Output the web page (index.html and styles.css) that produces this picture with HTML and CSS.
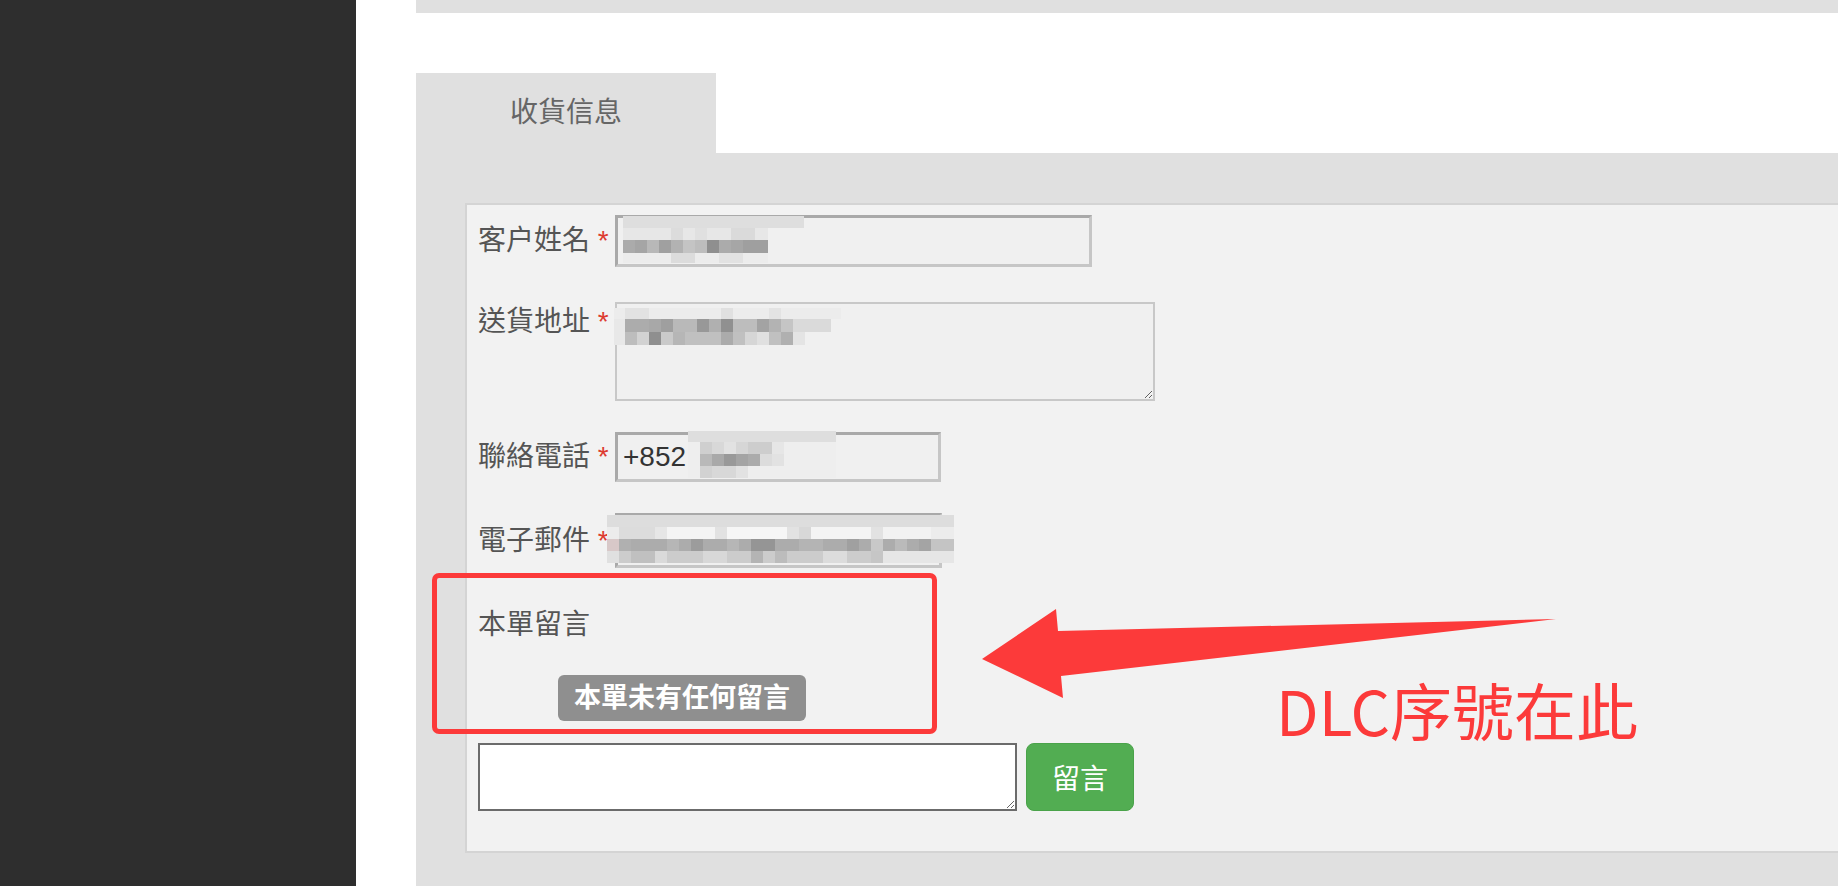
FILE: index.html
```html
<!DOCTYPE html>
<html lang="zh-Hant">
<head>
    <meta charset="UTF-8">
    <meta name="viewport" content="width=device-width, initial-scale=1.0">
    <title>收貨信息</title>
    <link rel="stylesheet" href="styles.css">
</head>
<body>
    <aside class="sidebar"></aside>

    <main class="main">
        <div class="topbar"></div>

        <div class="tabs">
            <div class="tab active">收貨信息</div>
        </div>

        <section class="tab-body">
            <div class="panel">
                <div class="field field-name">
                    <label class="field-label">客户姓名 <span class="req">*</span></label>
                    <div class="control">
                        <input type="text" class="input input-name" value="">
                        <svg class="mosaic m-name" width="181" height="47" shape-rendering="crispEdges">
                            <rect x="0" y="0" width="181" height="12" fill="#dedede"/>
                            <rect x="0" y="12" width="145" height="12" fill="#e7e7e7"/>
                            <rect x="48" y="12" width="12" height="12" fill="#dcdcdc"/>
                            <rect x="72" y="12" width="12" height="12" fill="#e0e0e0"/>
                            <rect x="108" y="12" width="24" height="12" fill="#dadada"/>
                            <rect x="0" y="24" width="145" height="13" fill="#ababab"/>
                            <rect x="12" y="24" width="12" height="13" fill="#a5a5a5"/>
                            <rect x="24" y="24" width="12" height="13" fill="#b8b8b8"/>
                            <rect x="36" y="24" width="12" height="13" fill="#a0a0a0"/>
                            <rect x="48" y="24" width="12" height="13" fill="#b2b2b2"/>
                            <rect x="60" y="24" width="12" height="13" fill="#c4c4c4"/>
                            <rect x="72" y="24" width="12" height="13" fill="#bdbdbd"/>
                            <rect x="84" y="24" width="12" height="13" fill="#8f8f8f"/>
                            <rect x="108" y="24" width="12" height="13" fill="#a6a6a6"/>
                            <rect x="120" y="24" width="25" height="13" fill="#9f9f9f"/>
                            <rect x="0" y="37" width="145" height="10" fill="#ececec"/>
                            <rect x="48" y="37" width="24" height="10" fill="#dcdcdc"/>
                            <rect x="96" y="37" width="24" height="10" fill="#e2e2e2"/>
                        </svg>
                    </div>
                </div>

                <div class="field field-top">
                    <label class="field-label">送貨地址 <span class="req">*</span></label>
                    <div class="control">
                        <textarea class="input-area"></textarea>
                        <svg class="mosaic m-address" width="227" height="37" shape-rendering="crispEdges">
                            <rect x="0" y="0" width="227" height="11" fill="#ececec"/>
                            <rect x="11" y="0" width="24" height="11" fill="#e2e2e2"/>
                            <rect x="107" y="0" width="12" height="11" fill="#e0e0e0"/>
                            <rect x="155" y="0" width="12" height="11" fill="#e3e3e3"/>
                            <rect x="0" y="11" width="11" height="26" fill="#e8e8e8"/>
                            <rect x="11" y="11" width="206" height="13" fill="#acacac"/>
                            <rect x="35" y="11" width="12" height="13" fill="#a8a8a8"/>
                            <rect x="47" y="11" width="12" height="13" fill="#9f9f9f"/>
                            <rect x="59" y="11" width="24" height="13" fill="#b9b9b9"/>
                            <rect x="83" y="11" width="12" height="13" fill="#989898"/>
                            <rect x="95" y="11" width="12" height="13" fill="#b0b0b0"/>
                            <rect x="107" y="11" width="12" height="13" fill="#909090"/>
                            <rect x="119" y="11" width="24" height="13" fill="#bdbdbd"/>
                            <rect x="143" y="11" width="12" height="13" fill="#a3a3a3"/>
                            <rect x="155" y="11" width="12" height="13" fill="#b3b3b3"/>
                            <rect x="167" y="11" width="12" height="13" fill="#c5c5c5"/>
                            <rect x="179" y="11" width="38" height="13" fill="#dadada"/>
                            <rect x="11" y="24" width="180" height="13" fill="#c0c0c0"/>
                            <rect x="11" y="24" width="12" height="13" fill="#bdbdbd"/>
                            <rect x="23" y="24" width="12" height="13" fill="#d2d2d2"/>
                            <rect x="35" y="24" width="12" height="13" fill="#8f8f8f"/>
                            <rect x="47" y="24" width="12" height="13" fill="#cacaca"/>
                            <rect x="59" y="24" width="12" height="13" fill="#b6b6b6"/>
                            <rect x="107" y="24" width="12" height="13" fill="#ababab"/>
                            <rect x="131" y="24" width="12" height="13" fill="#d6d6d6"/>
                            <rect x="143" y="24" width="12" height="13" fill="#e0e0e0"/>
                            <rect x="167" y="24" width="12" height="13" fill="#b0b0b0"/>
                            <rect x="179" y="24" width="12" height="13" fill="#e4e4e4"/>
                        </svg>
                    </div>
                </div>

                <div class="field">
                    <label class="field-label">聯絡電話 <span class="req">*</span></label>
                    <div class="control">
                        <input type="text" class="input input-phone" value="+852">
                        <svg class="mosaic m-phone" width="148" height="47" shape-rendering="crispEdges">
                            <rect x="0" y="0" width="148" height="11" fill="#dedede"/>
                            <rect x="0" y="11" width="148" height="36" fill="#eeeeee"/>
                            <rect x="12" y="11" width="12" height="12" fill="#cfcfcf"/>
                            <rect x="24" y="11" width="12" height="12" fill="#d8d8d8"/>
                            <rect x="36" y="11" width="12" height="12" fill="#e2e2e2"/>
                            <rect x="48" y="11" width="12" height="12" fill="#d6d6d6"/>
                            <rect x="60" y="11" width="24" height="12" fill="#cdcdcd"/>
                            <rect x="84" y="11" width="12" height="12" fill="#e6e6e6"/>
                            <rect x="12" y="23" width="12" height="12" fill="#b9b9b9"/>
                            <rect x="24" y="23" width="12" height="12" fill="#a9a9a9"/>
                            <rect x="36" y="23" width="12" height="12" fill="#999999"/>
                            <rect x="48" y="23" width="12" height="12" fill="#a4a4a4"/>
                            <rect x="60" y="23" width="12" height="12" fill="#ababab"/>
                            <rect x="72" y="23" width="12" height="12" fill="#dcdcdc"/>
                            <rect x="84" y="23" width="12" height="12" fill="#e2e2e2"/>
                            <rect x="12" y="35" width="12" height="12" fill="#d2d2d2"/>
                            <rect x="24" y="35" width="24" height="12" fill="#d8d8d8"/>
                            <rect x="48" y="35" width="12" height="12" fill="#e2e2e2"/>
                        </svg>
                    </div>
                </div>

                <div class="field">
                    <label class="field-label">電子郵件 <span class="req">*</span></label>
                    <div class="control">
                        <input type="text" class="input input-email" value="">
                        <svg class="mosaic m-email" width="347" height="48" shape-rendering="crispEdges">
                            <rect x="0" y="0" width="347" height="12" fill="#dddddd"/>
                            <rect x="0" y="12" width="347" height="12" fill="#ececec"/>
                            <rect x="12" y="12" width="36" height="12" fill="#dcdcdc"/>
                            <rect x="48" y="12" width="12" height="12" fill="#e6e6e6"/>
                            <rect x="60" y="12" width="48" height="12" fill="#f4f4f4"/>
                            <rect x="108" y="12" width="12" height="12" fill="#e2e2e2"/>
                            <rect x="120" y="12" width="60" height="12" fill="#f6f6f6"/>
                            <rect x="180" y="12" width="12" height="12" fill="#e2e2e2"/>
                            <rect x="192" y="12" width="12" height="12" fill="#d8d8d8"/>
                            <rect x="204" y="12" width="60" height="12" fill="#f4f4f4"/>
                            <rect x="264" y="12" width="12" height="12" fill="#e2e2e2"/>
                            <rect x="276" y="12" width="48" height="12" fill="#f2f2f2"/>
                            <rect x="0" y="24" width="347" height="12" fill="#acacac"/>
                            <rect x="0" y="24" width="12" height="12" fill="#d8c8c8"/>
                            <rect x="12" y="24" width="12" height="12" fill="#b0b0b0"/>
                            <rect x="60" y="24" width="12" height="12" fill="#b6b6b6"/>
                            <rect x="84" y="24" width="12" height="12" fill="#9c9c9c"/>
                            <rect x="120" y="24" width="12" height="12" fill="#b6b6b6"/>
                            <rect x="144" y="24" width="24" height="12" fill="#959595"/>
                            <rect x="192" y="24" width="24" height="12" fill="#b4b4b4"/>
                            <rect x="240" y="24" width="12" height="12" fill="#a0a0a0"/>
                            <rect x="264" y="24" width="12" height="12" fill="#c8c8c8"/>
                            <rect x="288" y="24" width="12" height="12" fill="#bababa"/>
                            <rect x="312" y="24" width="12" height="12" fill="#a4a4a4"/>
                            <rect x="324" y="24" width="23" height="12" fill="#c4c4c4"/>
                            <rect x="0" y="36" width="347" height="12" fill="#cccccc"/>
                            <rect x="0" y="36" width="12" height="12" fill="#e0e0e0"/>
                            <rect x="24" y="36" width="24" height="12" fill="#c0c0c0"/>
                            <rect x="48" y="36" width="12" height="12" fill="#dadada"/>
                            <rect x="96" y="36" width="24" height="12" fill="#d8d8d8"/>
                            <rect x="144" y="36" width="12" height="12" fill="#b4b4b4"/>
                            <rect x="168" y="36" width="12" height="12" fill="#bcbcbc"/>
                            <rect x="216" y="36" width="24" height="12" fill="#dcdcdc"/>
                            <rect x="264" y="36" width="12" height="12" fill="#c6c6c6"/>
                            <rect x="276" y="36" width="71" height="12" fill="#e6e6e6"/>
                        </svg>
                    </div>
                </div>

                <div class="note">
                    <div class="field-label">本單留言</div>
                    <div class="badge-row">
                        <span class="badge">本單未有任何留言</span>
                    </div>
                </div>

                <div class="comment-row">
                    <textarea class="comment-box"></textarea>
                    <button type="button" class="btn-green">留言</button>
                </div>

                <!-- annotation drawn over the screenshot -->
                <div class="mark-box"></div>
                <svg class="mark-arrow" width="590" height="105" viewBox="0 0 590 105">
                    <polygon points="7,58 81,8 83,30 581,18 86,75 88,97" fill="#fc3a3a"/>
                </svg>
                <div class="mark-text">DLC序號在此</div>
            </div>
        </section>
    </main>
</body>
</html>
```

FILE: styles.css
```css
* {
    box-sizing: border-box;
}
body {
    margin: 0;
    height: 100vh;
    display: flex;
    overflow: hidden;
    font-family: "Liberation Sans", "Noto Sans CJK TC", sans-serif;
    background-color: #fff;
}
.sidebar {
    width: 356px;
    flex-shrink: 0;
    background-color: #2e2e2e;
}
.main {
    flex: 1;
    min-width: 0;
    padding-left: 60px;
    overflow: hidden;
}
.main > * {
    width: 1480px;
}
.topbar {
    height: 13px;
    background-color: #e0e0e0;
    margin-bottom: 60px;
}
.tabs {
    display: flex;
}
.tab {
    width: 300px;
    height: 80px;
    line-height: 80px;
    text-align: center;
    font-size: 28px;
    color: #666;
    background-color: #e0e0e0;
}
.tab-body {
    background-color: #e0e0e0;
    padding: 50px 0 40px 49px;
}
.panel {
    position: relative;
    background-color: #f2f2f2;
    border: 2px solid #d4d4d4;
    border-right: none;
    padding: 10px 0 40px 11px;
}
.field {
    display: flex;
    align-items: center;
    margin-bottom: 31px;
}
.field-name {
    margin-bottom: 35px;
}
.field-top {
    align-items: flex-start;
}
.field-label {
    width: 137px;
    flex-shrink: 0;
    font-size: 28px;
    line-height: 40px;
    color: #555;
    white-space: nowrap;
}
.req {
    color: #dd3b2f;
}
.control {
    position: relative;
}
.input {
    display: block;
    height: 52px;
    width: 477px;
    border: 3px solid;
    border-color: #a9a9a9 #c6c6c6 #c6c6c6 #a9a9a9;
    background-color: #f0f0f0;
    padding: 0 5px;
    font-family: inherit;
    font-size: 28px;
    color: #333;
}
.input-phone {
    width: 326px;
    height: 50px;
}
.input-email {
    width: 327px;
    height: 55px;
}
.input-area {
    display: block;
    width: 540px;
    height: 99px;
    border: 2px solid #c8c8c8;
    background-color: #f0f0f0;
    font-family: inherit;
}
.mosaic {
    position: absolute;
    display: block;
}
.m-name {
    left: 8px;
    top: 1px;
}
.m-address {
    left: -1px;
    top: 6px;
}
.m-phone {
    left: 73px;
    top: -1px;
}
.m-email {
    left: -8px;
    top: 2px;
}
.note {
    margin-top: 37px;
}
.badge-row {
    display: flex;
    padding-left: 80px;
    margin-top: 30px;
}
.badge {
    height: 46px;
    line-height: 46px;
    padding: 0 16px;
    background-color: #8f8f8f;
    color: #fff;
    font-size: 27px;
    font-weight: bold;
    border-radius: 6px;
}
.comment-row {
    display: flex;
    gap: 9px;
    margin-top: 22px;
}
.comment-box {
    display: block;
    width: 539px;
    height: 68px;
    border: 2px solid #6b6b6b;
    background-color: #fff;
    font-family: inherit;
}
.btn-green {
    width: 108px;
    height: 68px;
    border: 1px solid #4aa34a;
    border-radius: 8px;
    background-color: #52ad52;
    color: #fff;
    font-family: inherit;
    font-size: 28px;
    padding: 0;
    cursor: pointer;
}
.mark-box {
    position: absolute;
    left: -35px;
    top: 368px;
    width: 505px;
    height: 161px;
    border: 5px solid #fc3a3a;
    border-radius: 7px;
}
.mark-arrow {
    position: absolute;
    left: 508px;
    top: 396px;
}
.mark-text {
    position: absolute;
    left: 809px;
    top: 473px;
    font-family: "Noto Sans CJK TC", sans-serif;
    font-size: 62px;
    line-height: 62px;
    color: #fc3a3a;
    white-space: nowrap;
}
```
